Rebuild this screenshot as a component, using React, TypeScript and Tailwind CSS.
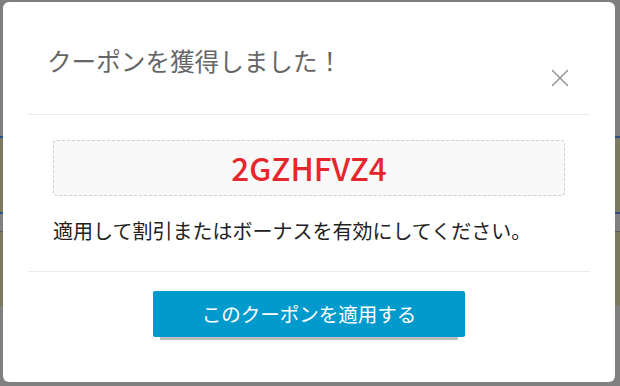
import { X } from "lucide-react";

const jp = { fontFamily: '"Noto Sans CJK JP", "Noto Sans", sans-serif' };

export default function App() {
  return (
    <div className="relative h-[386px] w-[620px] overflow-hidden bg-[#7f7f7f]" style={jp}>
      {/* dimmed page behind the modal */}
      <div className="flex h-full flex-col">
        <div className="h-[136px] bg-[#7f7f7f]" />
        <div className="h-[2px] bg-[#2a4f86]" />
        <div className="h-[74px] bg-[#7b7a5e]" />
        <div className="h-[2px] bg-[#2a4f86]" />
        <div className="h-[17px] bg-[#808080]" />
        <div className="h-[1px] bg-[#5a5a5a]" />
        <div className="h-[74px] bg-[#7b7a5e]" />
        <div className="flex-1 bg-[#808080]" />
      </div>

      <div className="absolute left-[3px] top-[2px] flex h-[380px] w-[612px] flex-col rounded-[6px] bg-white px-[25px]">
        <div className="flex h-[113px] items-start justify-between border-b border-[#ebebeb] pl-[19px] pr-[15px] pt-[40px]">
          <h2 className="text-[24.6px] leading-[36px] text-[#666666]">
            クーポンを獲得しました！
          </h2>
          <button type="button" className="mt-[21px] text-[#8f8f8f]">
            <X size={30} strokeWidth={1.1} />
          </button>
        </div>

        <div className="border-b border-[#ebebeb] px-[25px] pb-[25px] pt-[25px]">
          <div className="flex h-[56px] items-center justify-center rounded-[4px] border border-dashed border-[#cfcfcf] bg-[#f9f9f9]">
            <span className="text-[31.5px] font-medium leading-none text-[#e5262c]">
              2GZHFVZ4
            </span>
          </div>
          <p className="mt-[20px] text-[20px] leading-[30px] text-[#222222]">
            適用して割引またはボーナスを有効にしてください。
          </p>
        </div>

        <div className="flex justify-center pt-[19px]">
          <button
            type="button"
            className="h-[46px] w-[312px] rounded-[2px] bg-[#009acd] text-[19.5px] text-white shadow-[0_10px_0_-7px_#bdbdbd]"
          >
            このクーポンを適用する
          </button>
        </div>
      </div>
    </div>
  );
}
